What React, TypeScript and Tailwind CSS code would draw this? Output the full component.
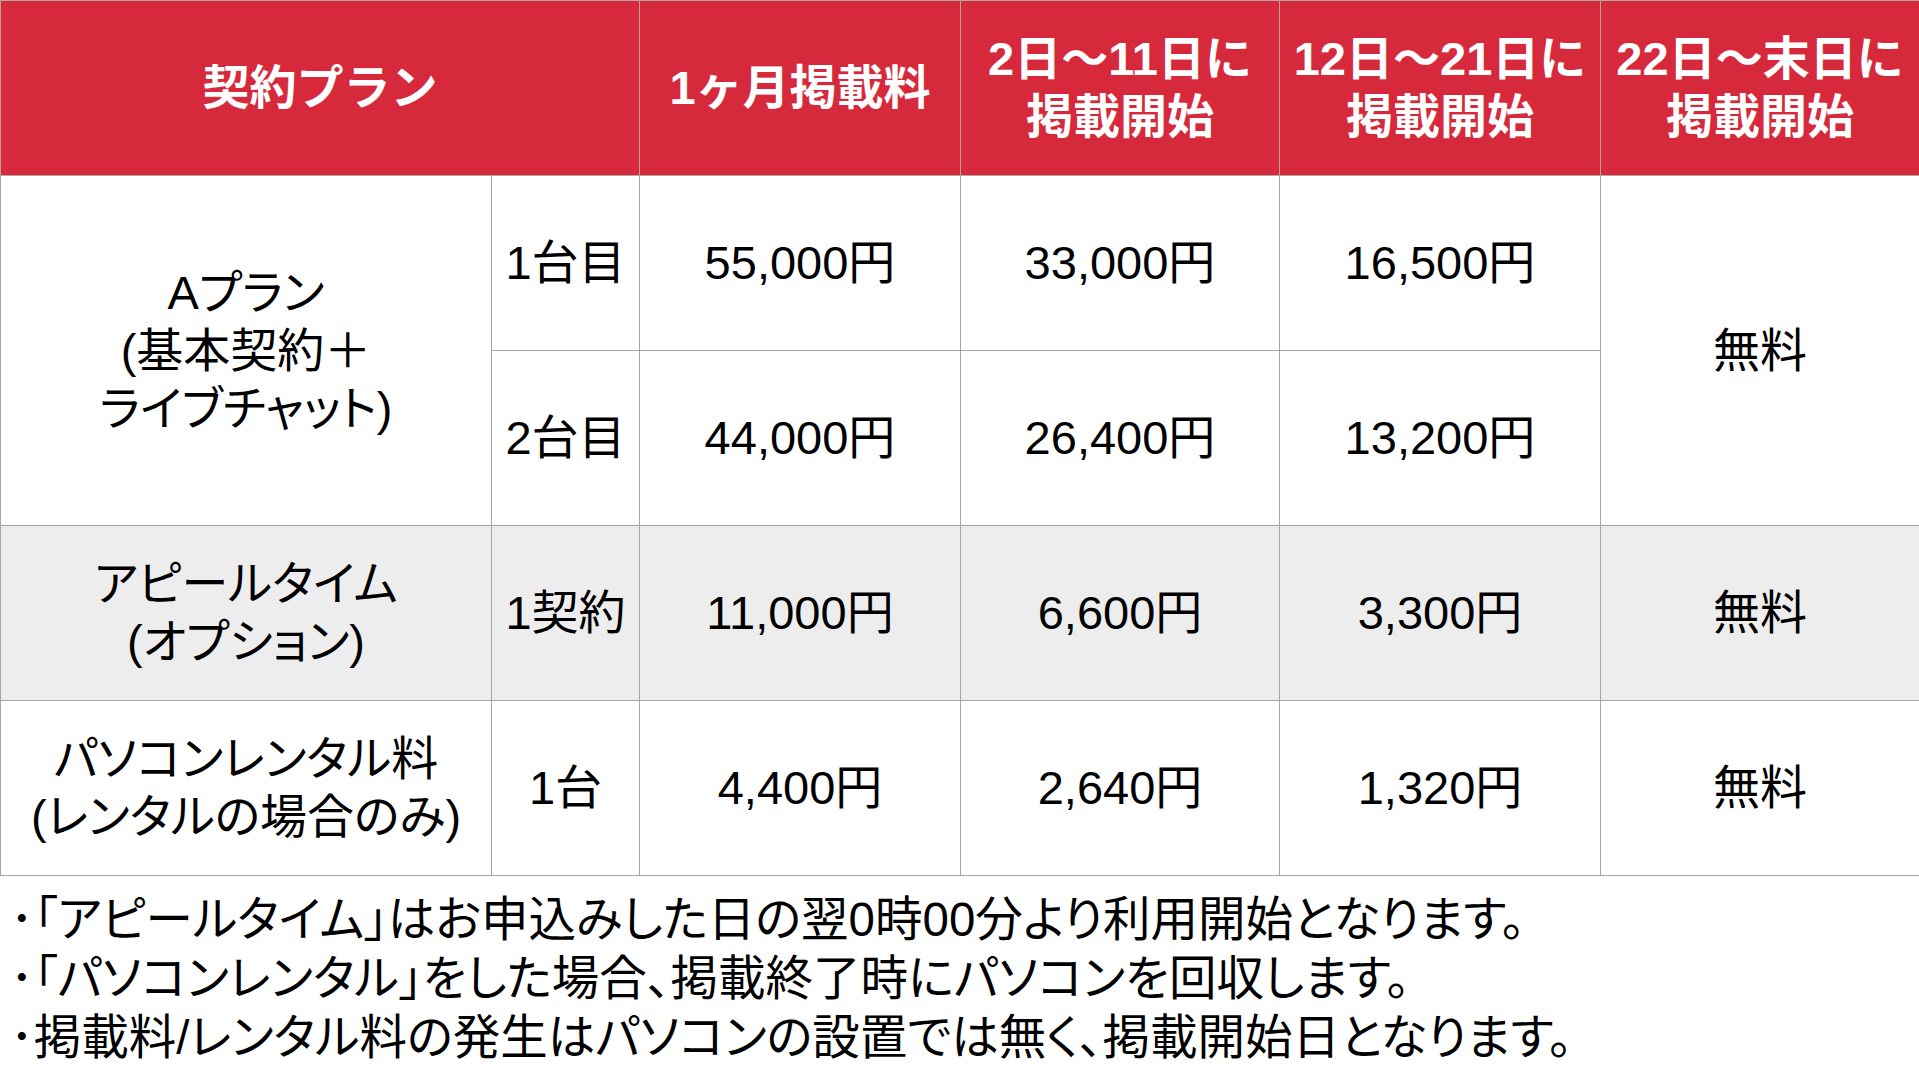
import React from 'react';

type PriceRow = {
  unit: string;
  monthly: string;
  early: string;
  mid: string;
};

const headCell =
  'border border-[#b7a3a6] bg-[#d62a3c] text-white font-bold text-[47px] leading-[58px] text-center align-middle';
const bodyCell =
  "border border-[#a5a5a5] text-black text-[47px] leading-[58px] text-center align-middle [font-feature-settings:'palt']";

const planA: PriceRow[] = [
  { unit: '1台目', monthly: '55,000円', early: '33,000円', mid: '16,500円' },
  { unit: '2台目', monthly: '44,000円', early: '26,400円', mid: '13,200円' },
];

const notes = [
  '･「アピールタイム」はお申込みした日の翌0時00分より利用開始となります。',
  '･「パソコンレンタル」をした場合、掲載終了時にパソコンを回収します。',
  '･掲載料/レンタル料の発生はパソコンの設置では無く、掲載開始日となります。',
];

export default function App() {
  return (
    <div className="w-[1919px] h-[1080px] overflow-hidden bg-white font-['Liberation_Sans','Noto_Sans_CJK_JP',sans-serif]">
      <table className="w-[1919px] table-fixed border-collapse">
        <colgroup>
          <col className="w-[491px]" />
          <col className="w-[148px]" />
          <col className="w-[321px]" />
          <col className="w-[319px]" />
          <col className="w-[321px]" />
          <col className="w-[319px]" />
        </colgroup>
        <thead>
          <tr className="h-[175px]">
            <th colSpan={2} className={headCell}>
              契約プラン
            </th>
            <th className={headCell}>1ヶ月掲載料</th>
            <th className={headCell}>
              2日～11日に
              <br />
              掲載開始
            </th>
            <th className={headCell}>
              12日～21日に
              <br />
              掲載開始
            </th>
            <th className={headCell}>
              22日～末日に
              <br />
              掲載開始
            </th>
          </tr>
        </thead>
        <tbody>
          {planA.map((row, i) => (
            <tr key={row.unit} className="h-[175px]">
              {i === 0 && (
                <td rowSpan={2} className={bodyCell}>
                  Aプラン
                  <br />
                  (基本契約＋
                  <br />
                  ライブチャット)
                </td>
              )}
              <td className={bodyCell}>{row.unit}</td>
              <td className={bodyCell}>{row.monthly}</td>
              <td className={bodyCell}>{row.early}</td>
              <td className={bodyCell}>{row.mid}</td>
              {i === 0 && (
                <td rowSpan={2} className={bodyCell}>
                  無料
                </td>
              )}
            </tr>
          ))}

          <tr className="h-[175px] bg-[#ededed]">
            <td className={bodyCell}>
              アピールタイム
              <br />
              (オプション)
            </td>
            <td className={bodyCell}>1契約</td>
            <td className={bodyCell}>11,000円</td>
            <td className={bodyCell}>6,600円</td>
            <td className={bodyCell}>3,300円</td>
            <td className={bodyCell}>無料</td>
          </tr>

          <tr className="h-[175px]">
            <td className={bodyCell}>
              パソコンレンタル料
              <br />
              (レンタルの場合のみ)
            </td>
            <td className={bodyCell}>1台</td>
            <td className={bodyCell}>4,400円</td>
            <td className={bodyCell}>2,640円</td>
            <td className={bodyCell}>1,320円</td>
            <td className={bodyCell}>無料</td>
          </tr>
        </tbody>
      </table>

      {/* Notes under the table */}
      <div className="pt-[14px] pl-[10px] text-[47.5px] leading-[59px] text-black [font-feature-settings:'palt']">
        {notes.map((n) => (
          <p key={n} className="whitespace-nowrap">
            {n}
          </p>
        ))}
      </div>
    </div>
  );
}
